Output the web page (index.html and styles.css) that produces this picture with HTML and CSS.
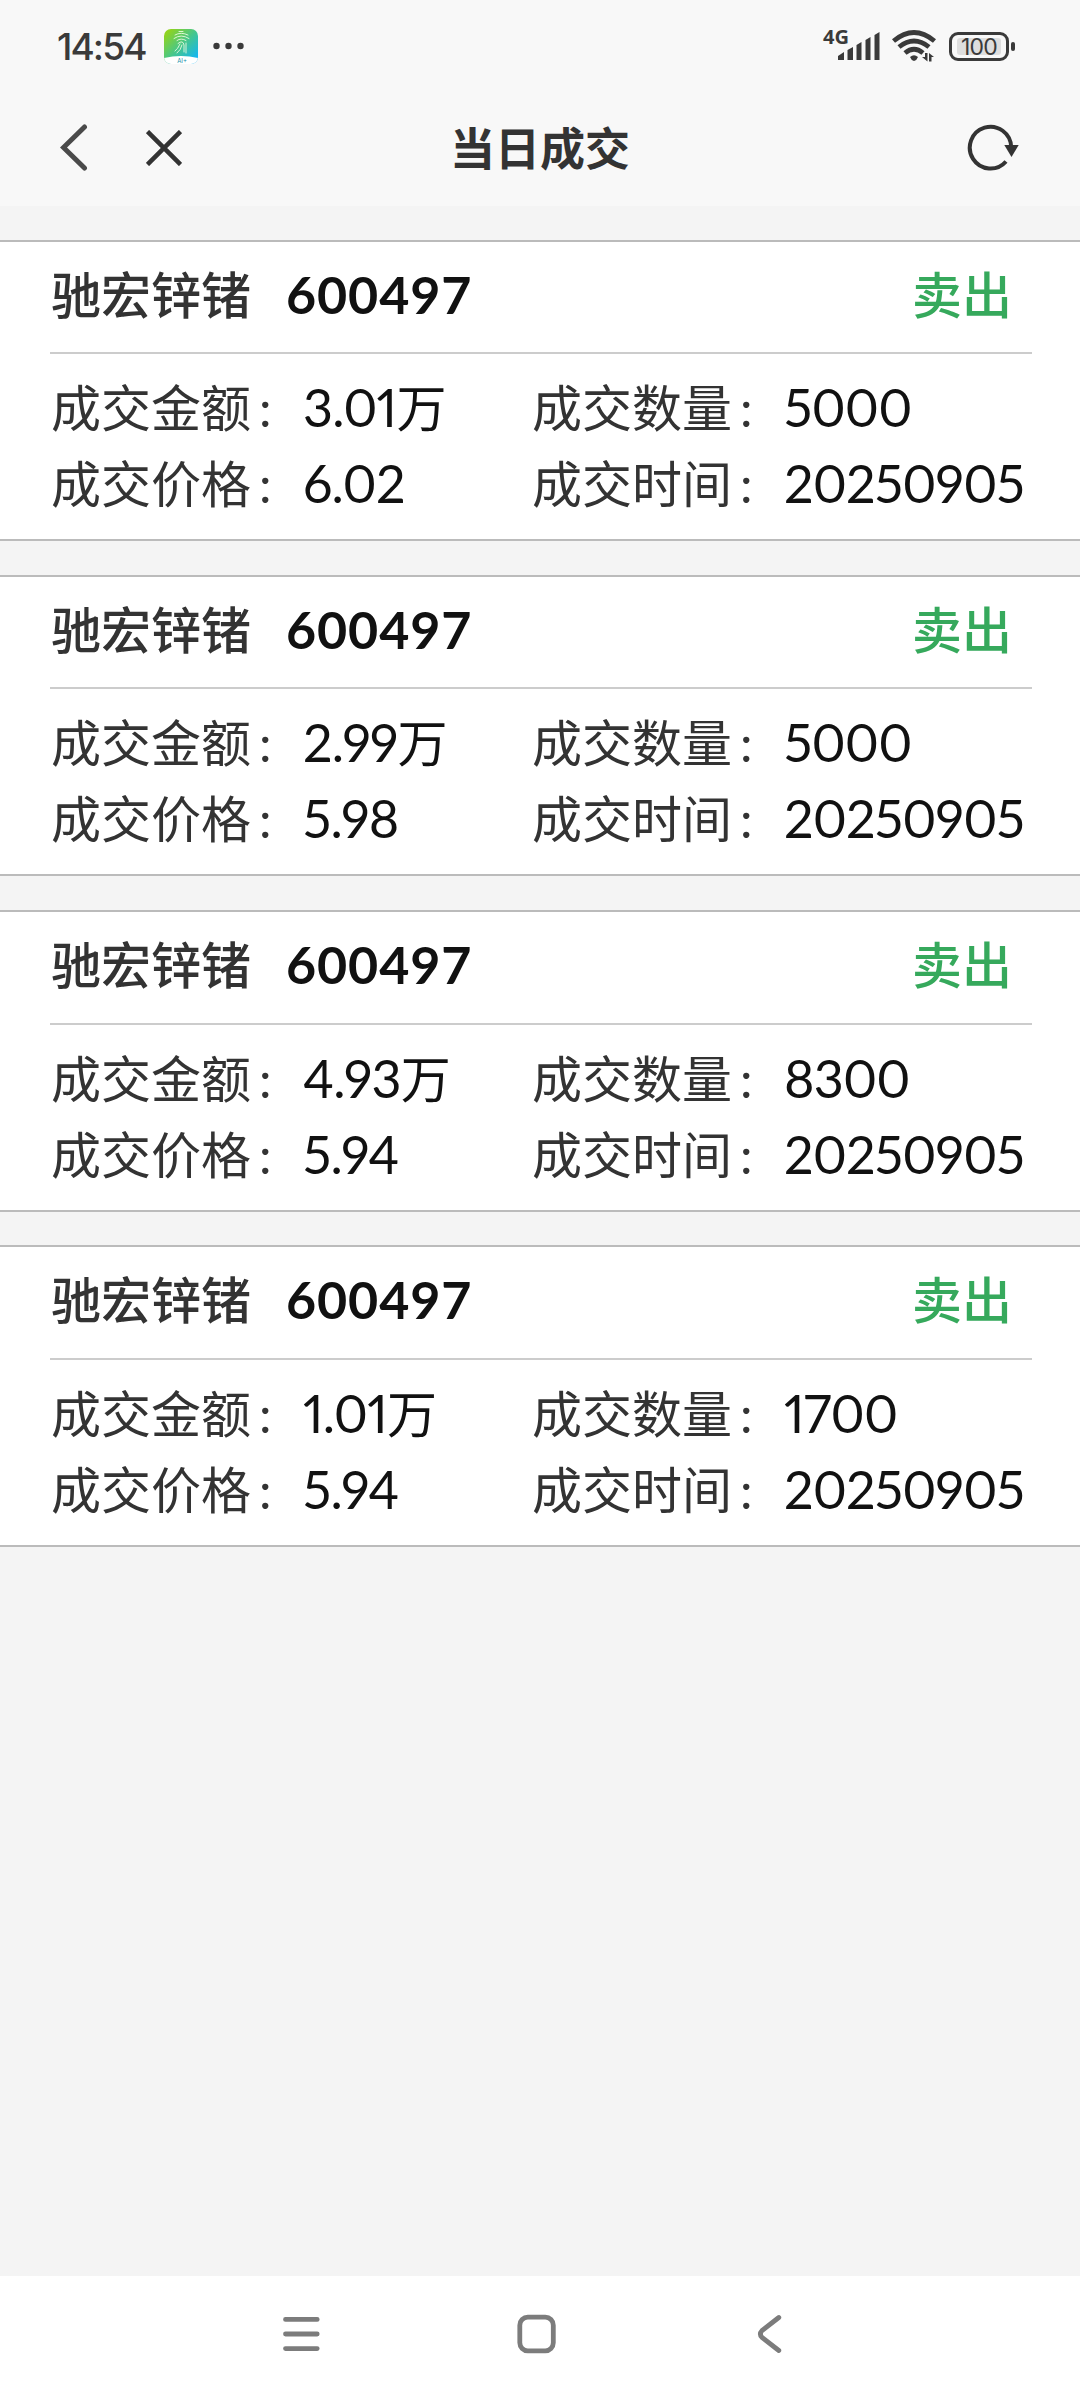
FILE: index.html
```
<!DOCTYPE html>
<html lang="zh-CN">
<head>
  <meta charset="UTF-8">
  <meta name="viewport" content="width=device-width, initial-scale=1.0">
  <title>当日成交</title>
  <link rel="stylesheet" href="styles.css">
</head>
<body>
  <header class="top">
    <div class="status-bar">
      <span class="clock">14:54</span>
      <svg class="app-icon" width="34" height="35" viewBox="0 0 34 35">
        <defs>
          <linearGradient id="appBg" x1="0" y1="0" x2="1" y2="1">
            <stop offset="0.1" stop-color="#8fd320"/>
            <stop offset="0.5" stop-color="#45c68d"/>
            <stop offset="0.9" stop-color="#12b5f5"/>
          </linearGradient>
          <clipPath id="appClip"><rect width="34" height="35" rx="7"/></clipPath>
        </defs>
        <g clip-path="url(#appClip)">
          <rect width="34" height="35" fill="url(#appBg)"/>
          <path d="M0 29Q17 25 34 29V35H0Z" fill="#fff"/>
        </g>
        <g fill="none" stroke="#e9fbe0" stroke-width="0.9" stroke-linecap="round">
          <path d="M15 2.5H19M11 6Q17 2.500 24 6M10 9.500Q17 4.500 25 9.500M13 11.500Q17 8.500 22 11.500"/>
          <path d="M14 14.500Q19 10.500 20 16V23M16 15Q14 20 11 22M18 16Q17 21 13 24M22 14V24"/>
        </g>
        <text class="app-tag" x="18" y="33.500" text-anchor="middle">AI+</text>
      </svg>
      <svg class="more" width="31" height="8" viewBox="0 0 31 8">
        <circle cx="3.500" cy="4" r="3.200"/><circle cx="15.500" cy="4" r="3.200"/><circle cx="27.500" cy="4" r="3.200"/>
      </svg>
      <svg class="signal" width="58" height="34" viewBox="0 0 58 34">
        <text class="net" x="0" y="15" textLength="26" lengthAdjust="spacingAndGlyphs">4G</text>
        <path d="M15 31V27L21 23V31ZM24.500 31V21L30 18V31ZM33.500 31V16L38.500 13V31ZM42.500 31V11L47.500 8V31ZM51.500 31V6L56.500 3V31Z"/>
      </svg>
      <svg class="wifi" width="44" height="34" viewBox="0 0 44 34">
        <g fill="none" stroke="#3a3a3a" stroke-width="4.800">
          <path d="M1.500 12Q22 -5 42.500 12M7 18Q22 6 37 18M13 24Q22 16.500 31 24"/>
        </g>
        <path d="M18 28Q22 24.500 26 28Q25 31 22 32Q19 31 18 28Z"/>
        <path d="M30 28H33V24H35.500V32.500ZM37 24L42 28H39.500V32.500H37Z"/>
      </svg>
      <div class="battery"><span>100</span></div>
    </div>
    <nav class="nav-bar">
      <svg class="back" width="28" height="48" viewBox="0 0 28 48">
        <path d="M24.500 3L3.500 23.500L24.500 44"/>
      </svg>
      <svg class="close" width="36" height="36" viewBox="0 0 36 36">
        <path d="M1.500 1.500L34.500 34.500M34.500 1.500L1.500 34.500"/>
      </svg>
      <h1>当日成交</h1>
      <svg class="refresh" width="52" height="48" viewBox="0 0 52 48">
        <path class="ring" d="M44.200 23.300A20.700 20.900 0 1 0 39 37.500"/>
        <path d="M37.300 21H51.700L44.500 33Z"/>
      </svg>
    </nav>
  </header>

  <main class="deals">
    <section class="deal">
      <div class="deal-head">
        <span class="name">驰宏锌锗</span>
        <span class="code">600497</span>
        <span class="side">卖出</span>
      </div>
      <div class="deal-body">
        <div class="field"><span class="label">成交金额</span><i>:</i><span class="value">3.01<b>万</b></span></div>
        <div class="field"><span class="label">成交数量</span><i>:</i><span class="value">5000</span></div>
        <div class="field"><span class="label">成交价格</span><i>:</i><span class="value">6.02</span></div>
        <div class="field"><span class="label">成交时间</span><i>:</i><span class="value">20250905</span></div>
      </div>
    </section>

    <section class="deal">
      <div class="deal-head">
        <span class="name">驰宏锌锗</span>
        <span class="code">600497</span>
        <span class="side">卖出</span>
      </div>
      <div class="deal-body">
        <div class="field"><span class="label">成交金额</span><i>:</i><span class="value">2.99<b>万</b></span></div>
        <div class="field"><span class="label">成交数量</span><i>:</i><span class="value">5000</span></div>
        <div class="field"><span class="label">成交价格</span><i>:</i><span class="value">5.98</span></div>
        <div class="field"><span class="label">成交时间</span><i>:</i><span class="value">20250905</span></div>
      </div>
    </section>

    <section class="deal">
      <div class="deal-head">
        <span class="name">驰宏锌锗</span>
        <span class="code">600497</span>
        <span class="side">卖出</span>
      </div>
      <div class="deal-body">
        <div class="field"><span class="label">成交金额</span><i>:</i><span class="value">4.93<b>万</b></span></div>
        <div class="field"><span class="label">成交数量</span><i>:</i><span class="value">8300</span></div>
        <div class="field"><span class="label">成交价格</span><i>:</i><span class="value">5.94</span></div>
        <div class="field"><span class="label">成交时间</span><i>:</i><span class="value">20250905</span></div>
      </div>
    </section>

    <section class="deal">
      <div class="deal-head">
        <span class="name">驰宏锌锗</span>
        <span class="code">600497</span>
        <span class="side">卖出</span>
      </div>
      <div class="deal-body">
        <div class="field"><span class="label">成交金额</span><i>:</i><span class="value">1.01<b>万</b></span></div>
        <div class="field"><span class="label">成交数量</span><i>:</i><span class="value">1700</span></div>
        <div class="field"><span class="label">成交价格</span><i>:</i><span class="value">5.94</span></div>
        <div class="field"><span class="label">成交时间</span><i>:</i><span class="value">20250905</span></div>
      </div>
    </section>
  </main>

  <footer class="system-nav">
    <svg width="40" height="44" viewBox="0 0 40 44">
      <path d="M4.500 7.400H36.200M4.500 22H36.200M4.500 36.600H36.200"/>
    </svg>
    <svg width="40" height="44" viewBox="0 0 40 44">
      <rect x="3.800" y="5.200" width="33.500" height="33.600" rx="8"/>
    </svg>
    <svg width="40" height="44" viewBox="0 0 40 44">
      <path d="M28.800 5.500L12 18.500Q8.800 22 12 25.500L28.800 38.500"/>
    </svg>
  </footer>
</body>
</html>
```
FILE: styles.css
```
* {
  margin: 0;
  padding: 0;
  box-sizing: border-box;
}

body {
  height: 2400px;
  display: flex;
  flex-direction: column;
  background-color: #f4f4f4;
  color: #333;
  font-family: Lato, "Noto Sans CJK SC", sans-serif;
}

/* Status bar and title */
.top {
  height: 206px;
  background-color: #f8f8f8;
}

.status-bar {
  height: 92px;
  padding: 0 71px 0 57px;
  display: flex;
  align-items: center;
  fill: #3a3a3a;
}

.clock {
  width: 107px;
  font: 500 37px Inter, sans-serif;
  letter-spacing: -1.9px;
  color: #3a3a3a;
}

.app-tag {
  font: 6px Inter, sans-serif;
  fill: #1590a8;
}

.more {
  margin-left: 15px;
}

.signal {
  margin-left: auto;
  margin-right: 11px;
  overflow: visible;
}

.net {
  font: 700 19px "Open Sans", sans-serif;
}

.wifi {
  margin-right: 13px;
}

.battery {
  width: 60px;
  height: 29px;
  position: relative;
  padding: 3px 5px;
  border: 3px solid #3a3a3a;
  border-radius: 9px;
}

.battery span {
  display: block;
  height: 17px;
  border-radius: 3px;
  background-color: #dedede;
  color: #3a3a3a;
  font: 400 23px/18px Inter, sans-serif;
  letter-spacing: -0.8px;
  text-align: center;
}

.battery::after {
  content: "";
  position: absolute;
  top: 7px;
  right: -9px;
  width: 4px;
  height: 9px;
  border-radius: 2px;
  background-color: #3a3a3a;
}

.nav-bar {
  height: 112px;
  display: grid;
  grid-template-columns: 86px 1fr auto 1fr;
  align-items: center;
  padding: 0 61px 0 60px;
}

.nav-bar h1 {
  margin-left: -86px;
  padding: 2px 0 0 1px;
  font-size: 45px;
  line-height: 60px;
}

.nav-bar svg {
  fill: none;
  stroke: #333;
}

.nav-bar .back {
  stroke: #4a4a4a;
  stroke-width: 5;
  stroke-linecap: round;
}

.nav-bar .close {
  stroke-width: 4.5;
}

.nav-bar .refresh {
  justify-self: end;
  fill: #333;
  stroke: none;
}

.nav-bar .ring {
  fill: none;
  stroke: #333;
  stroke-width: 4;
}

/* Deal list */
.deals {
  flex: 1;
  padding-top: 34.1px;
  display: flex;
  flex-direction: column;
  gap: 33.8px;
}

.deal {
  height: 301.3px;
  padding: 0 48px 0 50px;
  background-color: #fff;
  border-top: 2px solid #bbb;
  border-bottom: 2px solid #bbb;
}

.deal-head {
  height: 112.25px;
  padding-top: 22px;
  display: flex;
  align-items: baseline;
  border-bottom: 2px solid #ccc;
  font-size: 50px;
  font-weight: 500;
  line-height: 60px;
}

.deal-head .name {
  width: 236px;
  padding-left: 1px;
}

.deal-head .code {
  color: #111;
  font-size: 52px;
  font-weight: 700;
  letter-spacing: 0.9px;
}

.deal-head .side {
  margin-left: auto;
  padding-right: 20px;
  color: #36a95c;
}

.deal-body {
  display: grid;
  grid-template-columns: 481px 1fr;
  grid-auto-rows: 76px;
  padding-top: 18px;
}

.field {
  display: flex;
  align-items: baseline;
  padding-left: 1px;
  font-size: 50px;
  line-height: 70px;
  white-space: nowrap;
}

.field i {
  width: 52px;
  padding-left: 8px;
  font-style: normal;
}

.field .value {
  color: #111;
  font-size: 52px;
  font-variant-numeric: proportional-nums;
  letter-spacing: -0.8px;
}

.field b {
  font-size: 50px;
  font-weight: 400;
}

/* System navigation */
.system-nav {
  height: 124px;
  padding: 0 290px 8px 281px;
  display: flex;
  align-items: center;
  justify-content: space-between;
  background-color: #fff;
}

.system-nav svg {
  fill: none;
  stroke: #7c7c7c;
  stroke-width: 4.8;
  stroke-linecap: round;
}
```
